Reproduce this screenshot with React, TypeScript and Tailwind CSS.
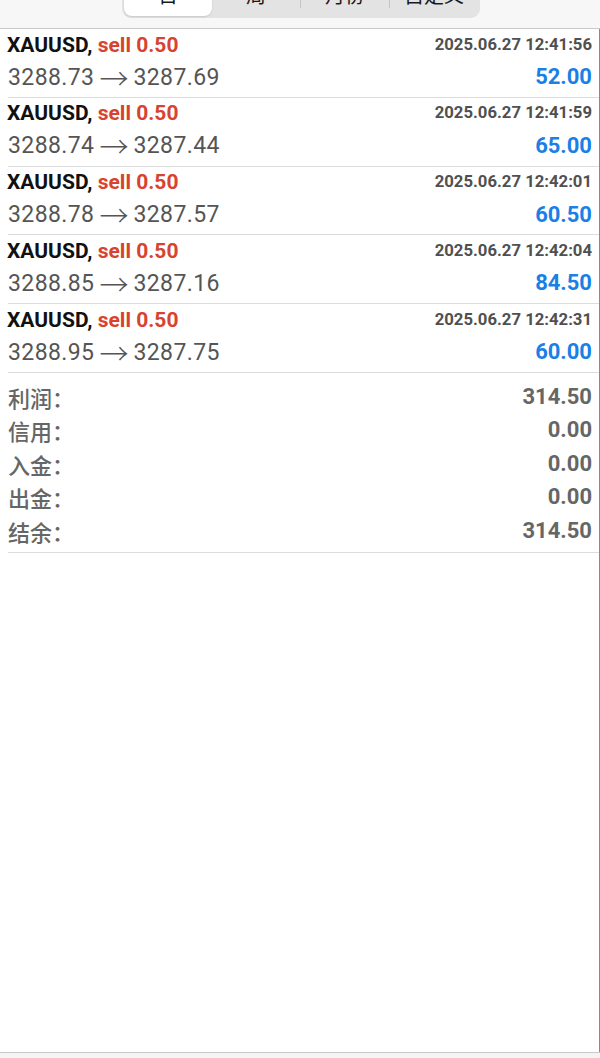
import React from "react";

const trades = [
  { open: "3288.73", close: "3287.69", time: "2025.06.27 12:41:56", profit: "52.00" },
  { open: "3288.74", close: "3287.44", time: "2025.06.27 12:41:59", profit: "65.00" },
  { open: "3288.78", close: "3287.57", time: "2025.06.27 12:42:01", profit: "60.50" },
  { open: "3288.85", close: "3287.16", time: "2025.06.27 12:42:04", profit: "84.50" },
  { open: "3288.95", close: "3287.75", time: "2025.06.27 12:42:31", profit: "60.00" },
];

const summary = [
  { label: "利润：", value: "314.50" },
  { label: "信用：", value: "0.00" },
  { label: "入金：", value: "0.00" },
  { label: "出金：", value: "0.00" },
  { label: "结余：", value: "314.50" },
];

const cjk = "font-['Noto_Sans_CJK_SC',sans-serif]";
const rob = "font-['Roboto','Noto_Sans_CJK_SC',sans-serif]";

export default function App() {
  return (
    <div className={`w-[600px] h-[1058px] flex flex-col bg-white ${rob}`}>
      {/* header with segmented control */}
      <div className="h-[29px] shrink-0 bg-[#f7f7f7] border-b border-[#c9c9c9] overflow-hidden flex justify-center">
        <div className="mt-[-28px] w-[358px] h-[46px] ml-[2px] rounded-[9px] bg-[#e3e3e4] flex items-center p-[2px]">
          <div className="flex-1 h-[42px] rounded-[8px] bg-white shadow-[0_1px_2px_rgba(0,0,0,0.12)] flex items-center justify-center">
            <span className={`${cjk} text-[20px] text-[#1a1a1a] leading-none`}>日</span>
          </div>
          <div className="flex-1 h-[42px] flex items-center justify-center relative">
            <span className={`${cjk} text-[20px] text-[#1a1a1a] leading-none`}>周</span>
          </div>
          <div className="w-px h-[26px] bg-[#c4c4c6]" />
          <div className="flex-1 h-[42px] flex items-center justify-center">
            <span className={`${cjk} text-[20px] text-[#1a1a1a] leading-none`}>月份</span>
          </div>
          <div className="w-px h-[26px] bg-[#c4c4c6]" />
          <div className="flex-1 h-[42px] flex items-center justify-center">
            <span className={`${cjk} text-[20px] text-[#1a1a1a] leading-none`}>自定义</span>
          </div>
        </div>
      </div>

      {/* content */}
      <div className="flex-1 bg-white border-r border-[#8a8a8a]">
        {trades.map((t, i) => (
          <div key={i} className="ml-[8px] h-[68.75px] border-b border-[#dcdcdc] pr-[7px]">
            <div className="h-[32px] flex items-center justify-between">
              <div className="text-[21px] font-bold leading-none whitespace-nowrap -ml-px">
                <span className="text-[#111111]">XAUUSD, </span>
                <span className="text-[#d8432f]">sell 0.50</span>
              </div>
              <div className="text-[16.7px] font-bold text-[#505050] leading-none whitespace-nowrap">{t.time}</div>
            </div>
            <div className="h-[32px] flex items-center justify-between">
              <div className="text-[23px] text-[#555555] leading-none whitespace-nowrap tracking-[0.4px] flex items-center">
                <span>{t.open}</span>
                <span className={`${cjk} text-[29px] font-light leading-none mx-[5px] tracking-normal`}>→</span>
                <span>{t.close}</span>
              </div>
              <div className="text-[22px] font-bold text-[#1b7fe6] leading-none">{t.profit}</div>
            </div>
          </div>
        ))}

        <div className="ml-[8px] pr-[7px] pt-[7px] pb-[5px] border-b border-[#dcdcdc]">
          {summary.map((s, i) => (
            <div key={i} className="h-[33.5px] flex items-center justify-between">
              <span className={`${cjk} text-[22px] font-medium text-[#666666] leading-none`}>{s.label}</span>
              <span className="text-[22px] font-bold text-[#666666] leading-none">{s.value}</span>
            </div>
          ))}
        </div>
      </div>

      {/* bottom bar edge */}
      <div className="h-[6px] shrink-0 bg-[#f4f4f4] border-t border-[#c9c9c9]" />
    </div>
  );
}
